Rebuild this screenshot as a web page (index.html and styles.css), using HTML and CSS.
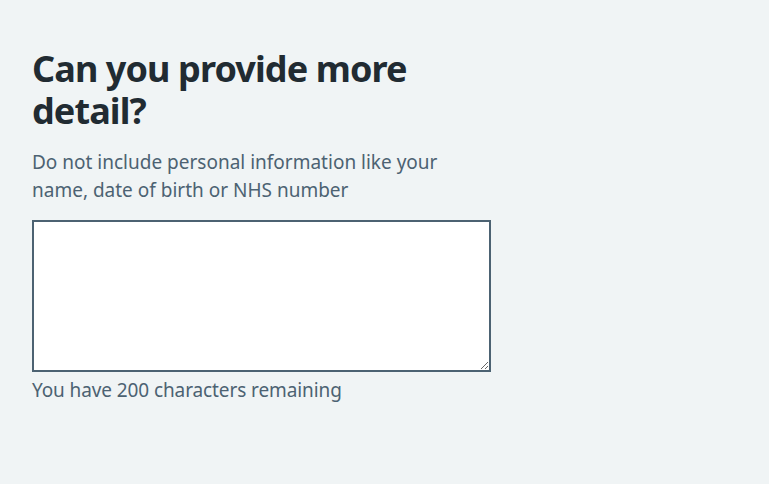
FILE: index.html
```html
<!DOCTYPE html>
<html lang="en">
<head>
<meta charset="utf-8">
<title>Character count</title>
<link rel="stylesheet" href="styles.css">
</head>
<body>
<main class="page">
  <div class="column">
    <div class="form-group">
      <h1 class="label-wrapper"><label class="label" for="more-detail">Can you provide more detail?</label></h1>
      <div class="hint" id="more-detail-hint">Do not include personal information like your name, date of birth or NHS number</div>
      <textarea class="textarea" id="more-detail" name="more-detail" rows="5" aria-describedby="more-detail-hint more-detail-info"></textarea>
      <div class="count-message" id="more-detail-info">You have 200 characters remaining</div>
    </div>
  </div>
</main>
</body>
</html>
```
FILE: styles.css
```css
* { box-sizing: border-box; }
html, body {
  margin: 0;
  padding: 0;
  background: #f0f4f5;
  font-family: "Noto Sans", sans-serif;
  color: #212b32;
}
.page {
  padding: 48px 32px 0;
}
.column {
  width: 459px;
}
.form-group {
  display: flex;
  flex-direction: column;
}
.label-wrapper {
  margin: 0 0 16px;
  font-size: 36px;
  line-height: 42px;
  font-weight: 700;
  letter-spacing: -0.9px;
}
.label {
  display: block;
}
.hint {
  font-size: 19px;
  line-height: 28px;
  color: #4c6272;
  margin-bottom: 16px;
}
.textarea {
  display: block;
  width: 100%;
  height: 152px;
  margin: 0;
  padding: 4px;
  border: 2px solid #4c6272;
  border-radius: 0;
  background: #ffffff;
  font-family: inherit;
  font-size: 19px;
  line-height: 28px;
  color: #212b32;
  resize: vertical;
}
.count-message {
  margin-top: 4px;
  font-size: 19px;
  line-height: 28px;
  color: #4c6272;
  letter-spacing: -0.1px;
}
```
